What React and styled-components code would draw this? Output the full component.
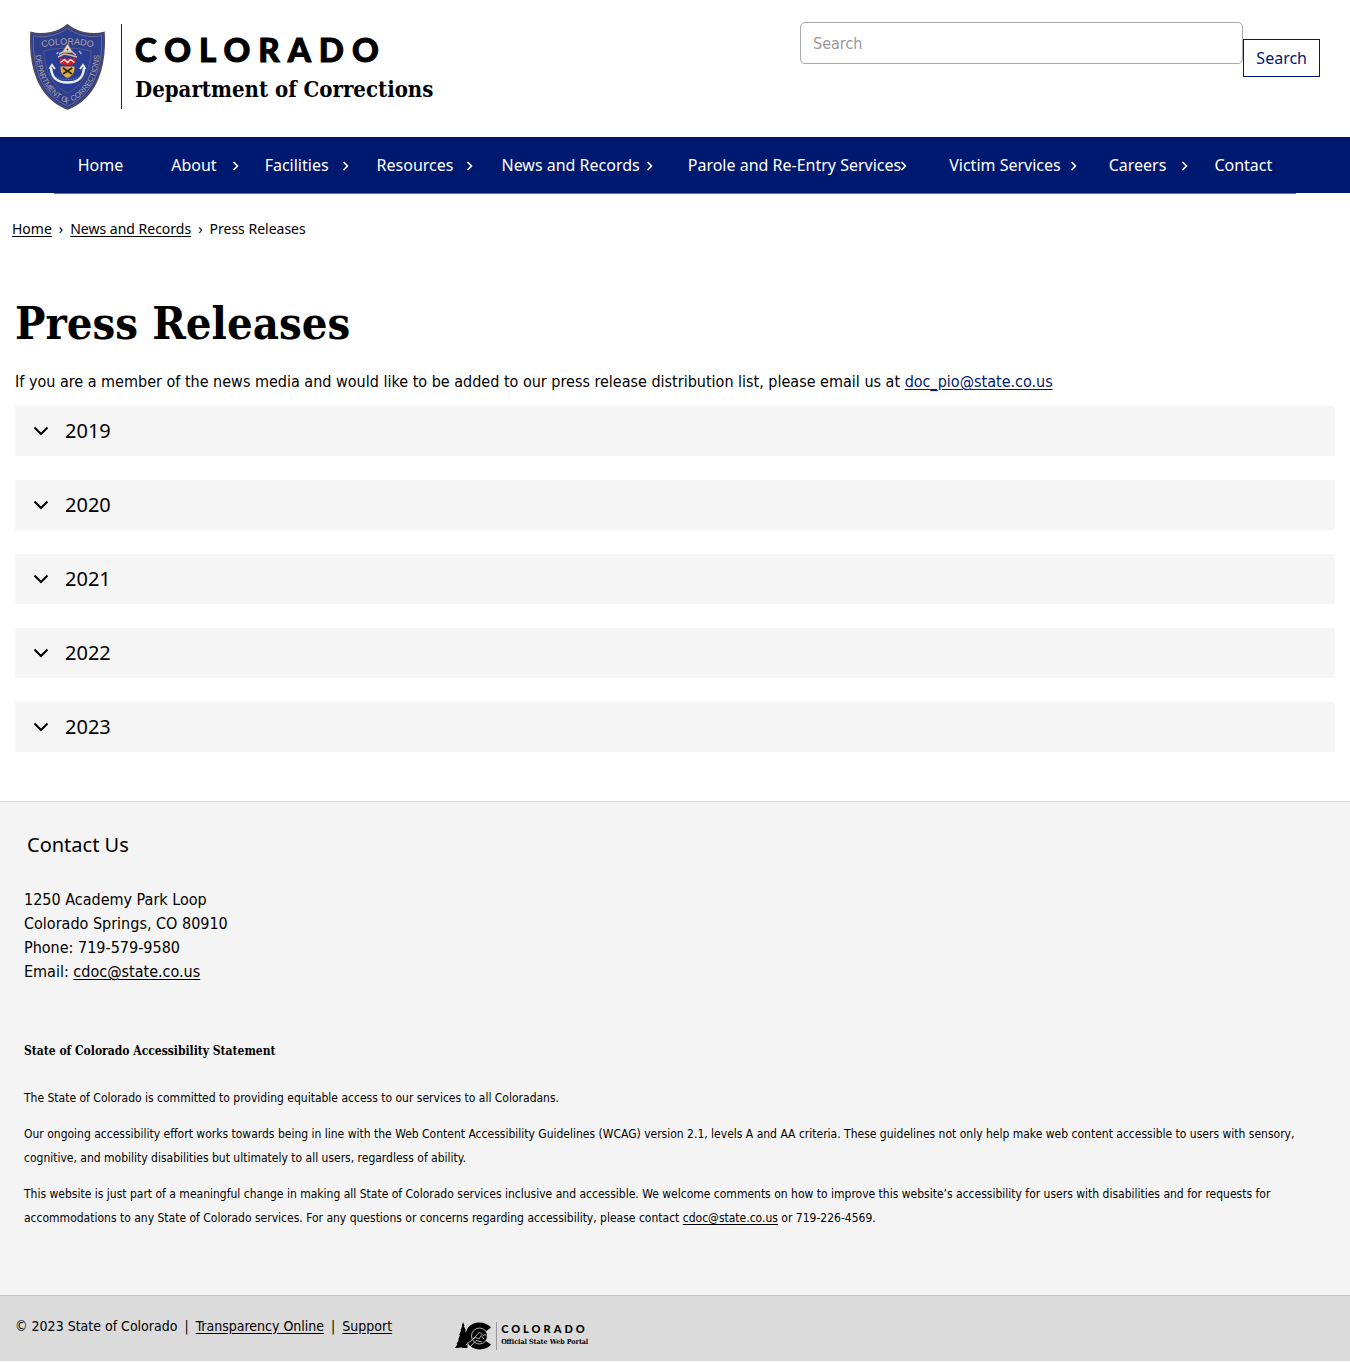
import React, { useState } from "react";
import styled, { createGlobalStyle, css } from "styled-components";

const sans = '"Noto Sans", "Open Sans", sans-serif';
const text = '"DejaVu Sans Condensed", "DejaVu Sans", sans-serif';
const slab = '"DejaVu Serif Condensed", "DejaVu Serif", serif';
const navy = "#001970";

const GlobalStyle = createGlobalStyle`
  *, *::before, *::after { box-sizing: border-box; }
  body { margin: 0; background: #fff; color: #000; font: 16px/24px ${text}; }
  h1, h2, h3, p, ul, ol, address { margin: 0; padding: 0; }
  ul, ol { list-style: none; }
`;

const Header = styled.header`
  display: flex;
  justify-content: space-between;
  align-items: flex-start;
  gap: 24px;
  padding: 22px 30px 27px;
`;

const Brand = styled.a`
  display: flex;
  align-items: flex-start;
  margin-top: 2px;
  color: #000;
  text-decoration: none;
`;

const BrandText = styled.span`
  display: flex;
  flex-direction: column;
  height: 85px;
  margin-left: 16px;
  padding: 5px 0 0 13px;
  border-left: 1px solid #222;
`;

const Wordmark = styled.span`
  font: 900 33px/40px Lato, sans-serif;
  letter-spacing: 8px;
  -webkit-text-stroke: 1px #000;
`;

const Agency = styled.span`
  font: 700 22px/40px ${slab};
  white-space: nowrap;
`;

const SearchForm = styled.form`
  display: flex;
  align-items: flex-start;
  flex: 0 1 520px;
`;

const SearchInput = styled.input`
  flex: 1;
  min-width: 0;
  height: 42px;
  padding: 0 12px;
  border: 1px solid #aaa;
  border-radius: 5px;
  background: #fff;
  color: #000;
  font: 16px/24px ${text};
  &::placeholder { color: #999; opacity: 1; }
`;

const SearchButton = styled.button`
  height: 38px;
  margin-top: 17px;
  padding: 0 12px;
  border: 1px solid ${navy};
  background: #fff;
  color: ${navy};
  font: 16px/24px ${sans};
  cursor: pointer;
`;

const NavBar = styled.nav`
  display: flex;
  justify-content: center;
  height: 56px;
  background: ${navy};
`;

const NavList = styled.ul`
  display: flex;
  height: 57px;
  background: ${navy};
  border-bottom: 1px solid #5f70ab;
`;

const NavItem = styled.li`
  position: relative;
`;

const NavLink = styled.a`
  display: block;
  padding: 16px 24px;
  color: #fff;
  font: 16px/24px ${sans};
  white-space: nowrap;
  text-decoration: none;
`;

const NavArrow = styled.svg`
  position: absolute;
  left: 90%;
  top: 24px;
`;

const Crumbs = styled.ol`
  display: flex;
  gap: 7px;
  padding: 26px 12px 0;
  font: 14px/20px ${sans};
`;

const TextLink = styled.a`
  color: ${(p) => (p.$navy ? navy : "#000")};
  text-decoration: underline;
  text-underline-offset: 2px;
`;

const Main = styled.main`
  padding: 58px 15px 49px;
`;

const Title = styled.h1`
  font: 700 45px/54px ${slab};
`;

const Intro = styled.p`
  margin: 19px 0 12px;
`;

const YearList = styled.div`
  display: flex;
  flex-direction: column;
  gap: 24px;
`;

const YearHeading = styled.h2`
  margin: 0;
`;

const YearButton = styled.button`
  display: flex;
  align-items: center;
  gap: 16px;
  width: 100%;
  height: 50px;
  padding: 0 18px;
  border: 0;
  background: #f5f5f5;
  color: #000;
  font: 20px/30px ${sans};
  text-align: left;
  cursor: pointer;
`;

const Chevron = styled.svg`
  ${(p) => p.$open && css`transform: rotate(180deg);`}
`;

const YearPanel = styled.p`
  padding: 12px 18px;
`;

const Contact = styled.footer`
  padding: 28px 24px 65px;
  border-top: 1px solid #d5d8d8;
  background: #f4f4f4;
`;

const ContactTitle = styled.h2`
  padding-left: 3px;
  font: 20px/30px ${sans};
`;

const Address = styled.address`
  display: flex;
  flex-direction: column;
  margin: 28px 0 57px;
  font-style: normal;
`;

const StatementTitle = styled.h3`
  margin-bottom: 25px;
  font: 700 12px/20px ${slab};
`;

const Statement = styled.div`
  display: flex;
  flex-direction: column;
  gap: 12px;
  font-size: 12px;
`;

const Legal = styled.div`
  display: flex;
  align-items: flex-start;
  gap: 63px;
  padding: 18px 15px 11px;
  border-top: 1px solid #c4c4c4;
  background: #dbdbdb;
`;

const LegalLinks = styled.div`
  display: flex;
  gap: 7px;
  font-size: 14px;
`;

const Portal = styled.a`
  display: flex;
  margin-top: 8px;
  color: #000;
  text-decoration: none;
`;

const PortalText = styled.span`
  display: flex;
  flex-direction: column;
  margin-left: 4px;
  padding-left: 4px;
  border-left: 1px solid #999;
`;

const PortalName = styled.span`
  font: 900 11px/14px Lato, sans-serif;
  letter-spacing: 3px;
`;

const PortalTag = styled.span`
  font: 700 7px/12px ${slab};
`;

function Crest() {
  return (
    <svg width="75" height="86" viewBox="0 0 75 86" aria-hidden="true">
      <defs>
        <path id="crest-top" d="M9 24 Q37.500 17 66 24" />
        <path id="crest-ring" d="M5 20 C5 49 15 71 37.500 79.500 C60 71 70 49 70 20" />
      </defs>
      <path
        d="M37.500 0.800 C29 8 14 12 1 8.500 C-1 44 9 74 37.500 85 C66 74 76 44 74 8.500 C61 12 46 8 37.500 0.800Z"
        fill="#2e3f8f"
        stroke="#504a61"
        strokeWidth="1.600"
      />
      <path
        d="M37.500 4 C29 11 15 14.500 3.500 11.500 C2 44 12 71.500 37.500 82 C63 71.500 73 44 71.500 11.500 C60 14.500 46 11 37.500 4Z"
        fill="none"
        stroke="#867d8e"
        strokeWidth="0.700"
      />
      <path
        d="M14 27 Q37.500 21 61 27 C60 46 54 61 37.500 69 C21 61 15 46 14 27Z"
        fill="#293d96"
        stroke="#6f6b8d"
        strokeWidth="0.600"
      />
      <g fill="#b0a6a0" fontFamily="Liberation Sans, sans-serif">
        <text fontSize="9" textAnchor="middle">
          <textPath href="#crest-top" startOffset="50%">COLORADO</textPath>
        </text>
        <text fontSize="7.600" textAnchor="middle">
          <textPath href="#crest-ring" startOffset="50%">DEPARTMENT OF CORRECTIONS</textPath>
        </text>
      </g>
      <path d="M37.500 20 L42.500 28 H32.500Z" fill="#e9e3d2" stroke="#b98c4c" strokeWidth="0.800" />
      <circle cx="37.500" cy="25.500" r="1" fill="#27356f" />
      <path d="M29 30 L33 28 L42 28 L46 31 M28 33 L34 30 L40 31 L47 33" fill="none" stroke="#d8b9a0" strokeWidth="1.500" />
      <path d="M49 27 L51.500 30 M26.500 30 L28.500 28" stroke="#9aa7d8" strokeWidth="1.500" />
      <path d="M29.500 34.500 H45.500 V39 C42 41.500 33 41.500 29.500 39Z" fill="#d62027" />
      <path d="M30.500 38.500 L34.500 35.500 L37.500 38.500 L40.500 35.500 L44.500 38.500" fill="none" stroke="#fff" strokeWidth="1.300" />
      <path d="M30.500 42.500 H44.500 C45 49 42 52 37.500 54 C33 52 30 49 30.500 42.500Z" fill="#dfae36" />
      <path d="M33 44 L42 50 M42 44 L33 50" stroke="#2c2013" strokeWidth="1.700" />
      <path d="M21 44 C22 56 29 58.500 37.500 58.500 C46 58.500 53 56 54 44" fill="none" stroke="#e8edf2" strokeWidth="2.600" />
      <path d="M19.500 45 L22 41 L25 45 M50 45 L53 41 L55.500 45" fill="none" stroke="#e8edf2" strokeWidth="2" />
      <path d="M24 51 C28 57 47 57 51 51" fill="none" stroke="#7684ad" strokeWidth="0.800" strokeDasharray="1.500 1" />
    </svg>
  );
}

function PortalMark() {
  return (
    <svg width="37" height="28" viewBox="0 0 37 28" aria-hidden="true">
      <path
        d="M8 0 L9.500 4 H8.800 L11 8.500 H10 L12 13 H11 L12.500 17 V26 H7.500 L7 25.500 L0 26 L2.500 22 H1.500 L4 17.500 H3 L5 13 H4.200 L6.200 8 H5.500 L7.300 4 H6.800Z"
        fill="#000"
      />
      <path
        d="M36 5.500 C30 -1.500 18 -1 13.500 5 C9 11 10 19 15 24 C21 29 31 28.500 36 22.500 L30 18.500 C27 21.500 22 21 20 18 C18 15 18.500 11 21 9 C24 7 28 7.500 30 10Z"
        fill="#000"
      />
      <circle cx="24.500" cy="14" r="8" fill="#000" stroke="#dbdbdb" strokeWidth="0.800" />
      <path d="M11 23 L18 17 L24.500 10 L28 13.500 L30 12.500 L35 17 M18 17 L21 15.500 L24 17 L26 13.500 L29 17 M15 25 L21 18.500 L27 20" fill="none" stroke="#dbdbdb" strokeWidth="0.800" />
      <path d="M31.500 10 L37 7 V21 L31.500 18 C33 15 33 13 31.500 10Z" fill="#dbdbdb" />
    </svg>
  );
}

const menu = [
  { label: "Home" },
  { label: "About", sub: true },
  { label: "Facilities", sub: true },
  { label: "Resources", sub: true },
  { label: "News and Records", sub: true },
  { label: "Parole and Re-Entry Services", sub: true },
  { label: "Victim Services", sub: true },
  { label: "Careers", sub: true },
  { label: "Contact" },
];

const years = ["2019", "2020", "2021", "2022", "2023"];

function YearSection({ year }) {
  const [open, setOpen] = useState(false);
  return (
    <section>
      <YearHeading>
        <YearButton type="button" aria-expanded={open} onClick={() => setOpen(!open)}>
          <Chevron $open={open} width="16" height="10" viewBox="0 0 16 10" aria-hidden="true">
            <path d="M1.500 1.500 L8 8 L14.500 1.500" fill="none" stroke="#000" strokeWidth="2" />
          </Chevron>
          {year}
        </YearButton>
      </YearHeading>
      {open && <YearPanel>{year}</YearPanel>}
    </section>
  );
}

export default function App() {
  return (
    <>
      <GlobalStyle />
      <Header>
        <Brand href="#">
          <Crest />
          <BrandText>
            <Wordmark>COLORADO</Wordmark>
            <Agency>Department of Corrections</Agency>
          </BrandText>
        </Brand>
        <SearchForm role="search" onSubmit={(e) => e.preventDefault()}>
          <SearchInput type="search" placeholder="Search" aria-label="Search" />
          <SearchButton type="submit">Search</SearchButton>
        </SearchForm>
      </Header>

      <NavBar>
        <NavList>
          {menu.map((item) => (
            <NavItem key={item.label}>
              <NavLink href="#">{item.label}</NavLink>
              {item.sub && (
                <NavArrow width="9" height="10" viewBox="0 0 9 10" aria-hidden="true">
                  <path d="M2.500 1 L6.500 5 L2.500 9" fill="none" stroke="#fff" strokeWidth="1.600" />
                </NavArrow>
              )}
            </NavItem>
          ))}
        </NavList>
      </NavBar>

      <nav aria-label="Breadcrumb">
        <Crumbs>
          <li><TextLink href="#">Home</TextLink></li>
          <li aria-hidden="true">›</li>
          <li><TextLink href="#">News and Records</TextLink></li>
          <li aria-hidden="true">›</li>
          <li>Press Releases</li>
        </Crumbs>
      </nav>

      <Main>
        <Title>Press Releases</Title>
        <Intro>
          If you are a member of the news media and would like to be added to our press release
          distribution list, please email us at{" "}
          <TextLink $navy href="mailto:doc_pio@state.co.us">doc_pio@state.co.us</TextLink>
        </Intro>
        <YearList>
          {years.map((year) => <YearSection key={year} year={year} />)}
        </YearList>
      </Main>

      <Contact>
        <ContactTitle>Contact Us</ContactTitle>
        <Address>
          <span>1250 Academy Park Loop</span>
          <span>Colorado Springs, CO 80910</span>
          <span>Phone: 719-579-9580</span>
          <span>Email: <TextLink href="mailto:cdoc@state.co.us">cdoc@state.co.us</TextLink></span>
        </Address>
        <StatementTitle>State of Colorado Accessibility Statement</StatementTitle>
        <Statement>
          <p>The State of Colorado is committed to providing equitable access to our services to all Coloradans.</p>
          <p>
            Our ongoing accessibility effort works towards being in line with the Web Content
            Accessibility Guidelines (WCAG) version 2.1, levels A and AA criteria. These guidelines
            not only help make web content accessible to users with sensory, cognitive, and mobility
            disabilities but ultimately to all users, regardless of ability.
          </p>
          <p>
            This website is just part of a meaningful change in making all State of Colorado services
            inclusive and accessible. We welcome comments on how to improve this website’s
            accessibility for users with disabilities and for requests for accommodations to any
            State of Colorado services. For any questions or concerns regarding accessibility, please
            contact <TextLink href="mailto:cdoc@state.co.us">cdoc@state.co.us</TextLink> or
            719-226-4569.
          </p>
        </Statement>
      </Contact>

      <Legal>
        <LegalLinks>
          <span>© 2023 State of Colorado</span>
          <span>|</span>
          <TextLink href="#">Transparency Online</TextLink>
          <span>|</span>
          <TextLink href="#">Support</TextLink>
        </LegalLinks>
        <Portal href="#">
          <PortalMark />
          <PortalText>
            <PortalName>COLORADO</PortalName>
            <PortalTag>Official State Web Portal</PortalTag>
          </PortalText>
        </Portal>
      </Legal>
    </>
  );
}
